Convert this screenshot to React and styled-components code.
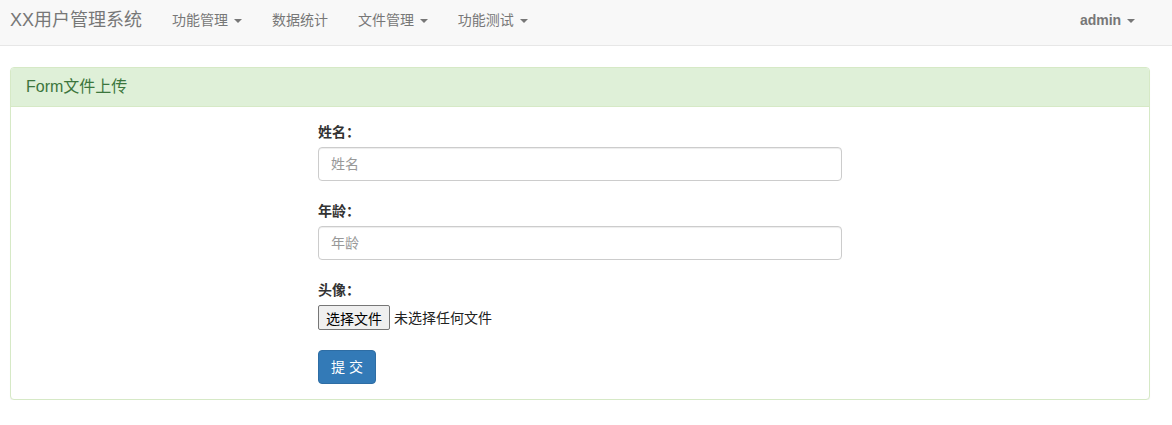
import React from "react"
import styled, { createGlobalStyle } from "styled-components"

const GlobalStyle = createGlobalStyle`
	* {
		box-sizing: border-box;
	}
	body {
		margin: 0;
		background: #fff;
		color: #333;
		font-family: "Liberation Sans", "Noto Sans CJK SC", sans-serif;
		font-size: 14px;
		line-height: 20px;
	}
`

const leftMenu = [
	{ label: "功能管理", dropdown: true },
	{ label: "数据统计" },
	{ label: "文件管理", dropdown: true },
	{ label: "功能测试", dropdown: true },
]

const fields = [
	{ label: "姓名：", placeholder: "姓名" },
	{ label: "年龄：", placeholder: "年龄" },
]

const App = () => {
	return (
		<>
			<GlobalStyle />
			<Navbar>
				<Brand>XX用户管理系统</Brand>
				{leftMenu.map(item =>
					<NavLink key={item.label}>
						{item.label}
						{item.dropdown && <> <Caret /></>}
					</NavLink>
				)}
				<RightNav>
					<NavLink bold>admin <Caret /></NavLink>
				</RightNav>
			</Navbar>

			<Panel>
				<PanelHeading>Form文件上传</PanelHeading>
				<PanelBody>
					<Form onSubmit={e => e.preventDefault()}>
						{fields.map(f =>
							<FormGroup key={f.label}>
								<Label>{f.label}</Label>
								<Input type="text" placeholder={f.placeholder} />
							</FormGroup>
						)}
						<FormGroup>
							<Label>头像：</Label>
							<FileRow>
								<FileButton type="button">选择文件</FileButton>
								<FileText>未选择任何文件</FileText>
							</FileRow>
						</FormGroup>
						<SubmitButton type="submit">提 交</SubmitButton>
					</Form>
				</PanelBody>
			</Panel>
		</>
	)
}

const Navbar = styled.nav`
	display: flex;
	align-items: flex-start;
	height: 46px;
	background: #f8f8f8;
	border-bottom: 1px solid #e7e7e7;
`

const Brand = styled.a`
	padding: 10px 15px 0 10px;
	font-size: 18px;
	line-height: 20px;
	color: #777;
`

const NavLink = styled.a`
	display: block;
	padding: 10px 15px 0;
	line-height: 20px;
	color: #777;
	font-weight: ${props => props.bold ? "bold" : "normal"};
	cursor: pointer;

	&:hover {
		color: #333;
	}
`

const Caret = styled.span`
	display: inline-block;
	width: 0;
	height: 0;
	margin-left: 2px;
	vertical-align: middle;
	border-top: 4px solid;
	border-left: 4px solid transparent;
	border-right: 4px solid transparent;
`

const RightNav = styled.div`
	display: flex;
	margin-left: auto;
	padding-right: 22px;
`

const Panel = styled.div`
	width: 1140px;
	margin: 21px 0 0 10px;
	background: #fff;
	border: 1px solid #d6e9c6;
	border-radius: 4px;
	box-shadow: 0 1px 1px rgba(0, 0, 0, 0.05);
`

const PanelHeading = styled.div`
	height: 39px;
	padding: 9px 15px 0;
	background: #dff0d8;
	color: #3c763d;
	font-size: 16px;
	line-height: 20px;
	border-bottom: 1px solid #d6e9c6;
	border-radius: 3px 3px 0 0;
`

const PanelBody = styled.div`
	padding: 15px;
`

const Form = styled.form`
	width: 524px;
	margin: 0 auto;
`

const FormGroup = styled.div`
	margin-bottom: 20px;
`

const Label = styled.label`
	display: block;
	margin-bottom: 5px;
	font-weight: bold;
	color: #333;
`

const Input = styled.input`
	display: block;
	width: 100%;
	height: 34px;
	padding: 6px 12px;
	font-family: inherit;
	font-size: 14px;
	color: #555;
	background: #fff;
	border: 1px solid #ccc;
	border-radius: 4px;
	box-shadow: inset 0 1px 1px rgba(0, 0, 0, 0.075);
	outline: none;

	&::placeholder {
		color: #999;
	}

	&:focus {
		border-color: #66afe9;
	}
`

const FileRow = styled.div`
	display: flex;
	align-items: center;
	gap: 4px;
`

const FileButton = styled.button`
	height: 25px;
	width: 72px;
	padding: 0 6px;
	font-family: inherit;
	font-size: 14px;
	color: #000;
	background: #efefef;
	border: 1px solid #767676;
	border-radius: 2px;
`

const FileText = styled.span`
	color: #222;
`

const SubmitButton = styled.button`
	height: 34px;
	padding: 6px 12px;
	font-family: inherit;
	font-size: 14px;
	line-height: 20px;
	color: #fff;
	background: #337ab7;
	border: 1px solid #2e6da4;
	border-radius: 4px;
	cursor: pointer;
	white-space: pre;
`

export default App
